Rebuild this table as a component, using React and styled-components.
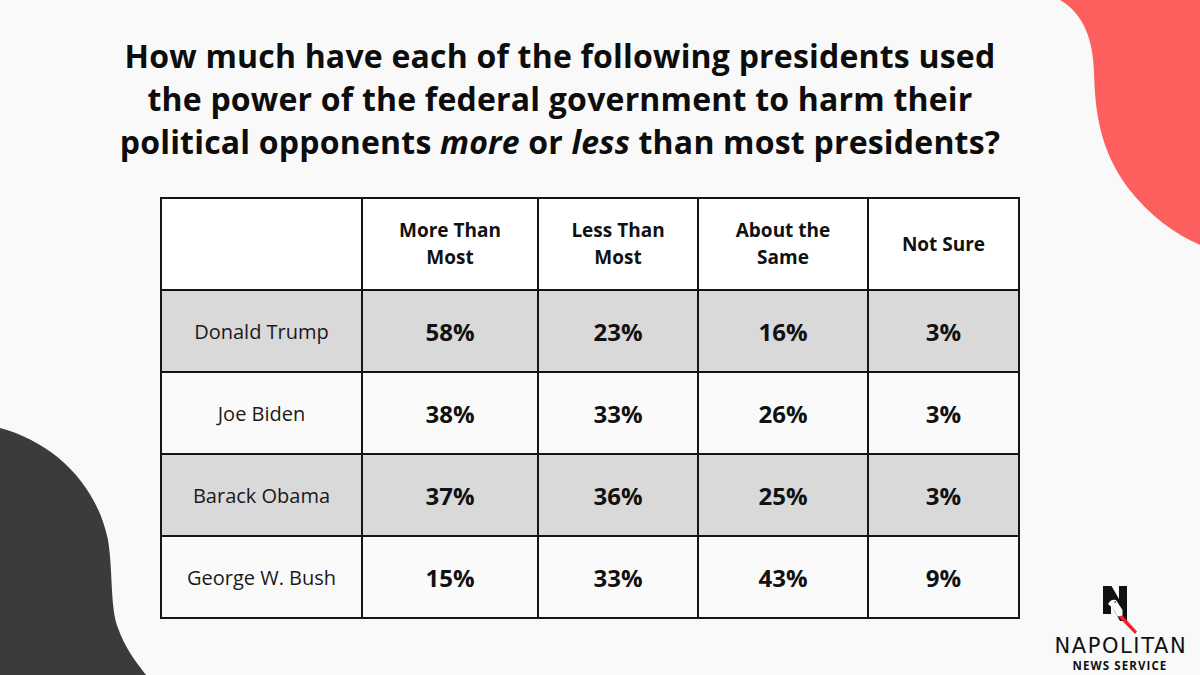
import React from "react";
import styled, { createGlobalStyle } from "styled-components";

const Global = createGlobalStyle`
  html, body { margin: 0; padding: 0; background: #f9f9f9; }
  body { font-family: "Open Sans", "Liberation Sans", sans-serif; color: #111; }
`;

const Page = styled.div`
  position: relative;
  width: 1200px;
  height: 675px;
  overflow: hidden;
  background: #f9f9f9;
`;

const Deco = styled.svg`
  position: absolute;
  inset: 0;
  width: 1200px;
  height: 675px;
  pointer-events: none;
`;

const Layout = styled.div`
  position: relative;
  display: grid;
  grid-template-columns: 1040px 160px;
  height: 100%;
`;

const Main = styled.div`
  display: flex;
  flex-direction: column;
  padding-top: 34px;
`;

const Title = styled.h1`
  margin: 0 0 0 90px;
  width: 940px;
  text-align: center;
  font-size: 32px;
  font-weight: 700;
  line-height: 43px;
  letter-spacing: 0.2px;
  color: #0d0d0d;
  em { font-style: italic; }
`;

const TableWrap = styled.div`
  margin: 34px 0 0 160px;
`;

const Table = styled.table`
  border-collapse: collapse;
  width: 858px;
  table-layout: fixed;
  border: 2px solid #151515;
`;

const Th = styled.th`
  border: 2px solid #151515;
  background: #ffffff;
  height: 90px;
  font-size: 19px;
  font-weight: 700;
  line-height: 27px;
  padding: 0 16px;
  text-align: center;
  color: #111;
`;

const Row = styled.tr`
  background: ${(p) => (p.$shaded ? "#d9d9d9" : "#fafafa")};
`;

const NameCell = styled.td`
  border: 2px solid #151515;
  height: 78px;
  text-align: center;
  font-size: 20px;
  font-weight: 400;
  color: #1a1a1a;
`;

const ValCell = styled.td`
  border: 2px solid #151515;
  height: 78px;
  text-align: center;
  font-size: 24px;
  font-weight: 700;
  color: #111;
`;

const Side = styled.div`
  display: flex;
  flex-direction: column;
  justify-content: flex-end;
  align-items: center;
  padding-bottom: 3px;
`;

const Logo = styled.div`
  display: flex;
  flex-direction: column;
  align-items: center;
`;

const Mark = styled.svg`
  width: 36px;
  height: 48px;
  display: block;
  margin: 0 0 1px 0;
`;

const Brand = styled.div`
  font-family: "DejaVu Sans", "Liberation Sans", sans-serif;
  font-size: 21px;
  font-weight: 400;
  letter-spacing: 1.6px;
  color: #111;
  line-height: 22px;
  margin-right: -1.6px;
`;

const Sub = styled.div`
  font-family: "Open Sans", sans-serif;
  font-size: 11.5px;
  font-weight: 700;
  letter-spacing: 1.1px;
  color: #111;
  line-height: 13px;
  margin-top: 2px;
`;

const cols = ["More Than Most", "Less Than Most", "About the Same", "Not Sure"];
const rows = [
  { name: "Donald Trump", vals: ["58%", "23%", "16%", "3%"] },
  { name: "Joe Biden", vals: ["38%", "33%", "26%", "3%"] },
  { name: "Barack Obama", vals: ["37%", "36%", "25%", "3%"] },
  { name: "George W. Bush", vals: ["15%", "33%", "43%", "9%"] },
];
const widths = [201, 176, 160, 170, 151];

export default function App() {
  return (
    <>
      <Global />
      <Page>
        <Deco viewBox="0 0 1200 675">
          <path
            d="M1060,0 C1084,14 1093,40 1094,72 C1095,112 1100,150 1128,188 C1150,216 1175,234 1200,245 L1200,0 Z"
            fill="#fd5f5f"
          />
          <path
            d="M0,428 C52,442 96,482 108,540 C113,570 110,608 118,628 C125,648 136,662 146,675 L0,675 Z"
            fill="#3b3b3b"
          />
        </Deco>
        <Layout>
          <Main>
            <Title>
              How much have each of the following presidents used
              <br />
              the power of the federal government to harm their
              <br />
              political opponents <em>more</em> or <em>less</em> than most presidents?
            </Title>
            <TableWrap>
              <Table>
                <colgroup>
                  {widths.map((w, i) => (
                    <col key={i} style={{ width: w }} />
                  ))}
                </colgroup>
                <thead>
                  <tr>
                    <Th />
                    {cols.map((c) => (
                      <Th key={c}>{c}</Th>
                    ))}
                  </tr>
                </thead>
                <tbody>
                  {rows.map((r, i) => (
                    <Row key={r.name} $shaded={i % 2 === 0}>
                      <NameCell>{r.name}</NameCell>
                      {r.vals.map((v, j) => (
                        <ValCell key={j}>{v}</ValCell>
                      ))}
                    </Row>
                  ))}
                </tbody>
              </Table>
            </TableWrap>
          </Main>
          <Side>
            <Logo>
              <Mark viewBox="0 0 36 48">
                <path
                  d="M1,0 L9.5,0 L17,13 L17,0 L25,0 L25,35 L18,35 L9,19 L9,28 L1,28 Z"
                  fill="#111"
                />
                <path
                  d="M6,18 C8,14 11,13 14,14 L20.5,24 L20.5,30.5 L15.5,30.5 C13,25 10,21 6,18 Z"
                  fill="#f9f9f9"
                />
                <circle cx="13.2" cy="16" r="0.8" fill="#111" />
                <path d="M16,30.5 L20.5,29.5 L35,45.5 L33,48 Z" fill="#e8262b" />
              </Mark>
              <Brand>NAPOLITAN</Brand>
              <Sub>NEWS SERVICE</Sub>
            </Logo>
          </Side>
        </Layout>
      </Page>
    </>
  );
}
